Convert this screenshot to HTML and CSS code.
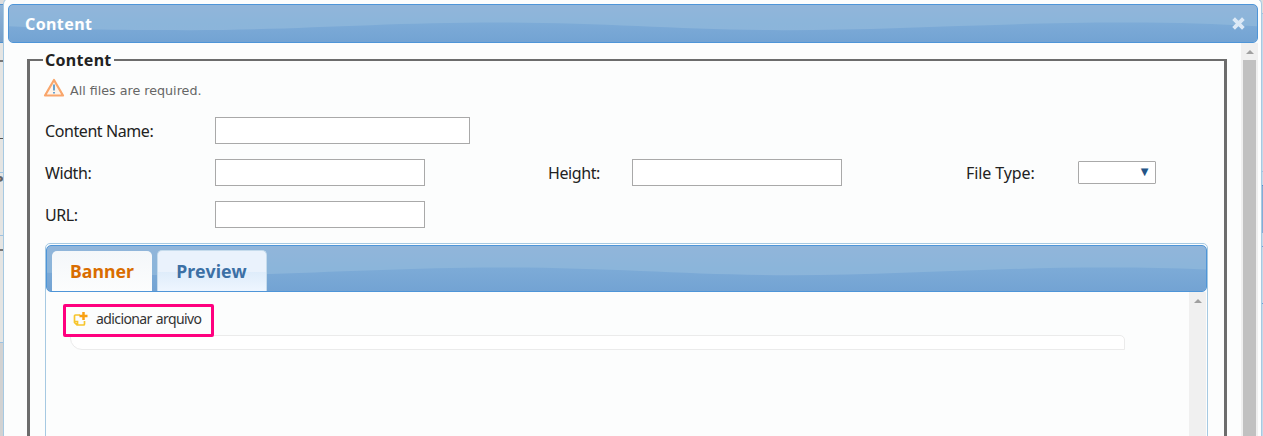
FILE: index.html
```html
<!DOCTYPE html>
<html lang="en">
<head>
<meta charset="utf-8">
<title>Content</title>
<link rel="stylesheet" href="styles.css">
</head>
<body>
<div class="backdrop">
  <div class="edge edge-left"><i class="l1"></i><i class="l2"></i><i class="l3"></i><i class="l4"></i><i class="l5"></i><i class="l6">P</i><i class="l7"></i><i class="l8"></i><i class="l9"></i></div>
  <div class="edge edge-right"><i class="r1"></i><i class="r2"></i><i class="r3"></i><i class="r4"></i><i class="r5"></i><i class="r6"></i></div>
</div>
<section class="dialog">
  <header class="titlebar bar">
    <svg class="wave" viewBox="0 0 1250 39" preserveAspectRatio="none"><defs><linearGradient id="gloss" x2="0" y2="1"><stop stop-color="#7dabd7"/><stop offset="1" stop-color="#73a3d3"/></linearGradient></defs><path d="M0 22.500C60 26 100 26.500 180 26.500C290 26.500 370 18.500 492 18.500C600 18.500 670 26.500 775 26.500C890 26.500 990 18.500 1119 18.500C1170 18.500 1210 20 1250 22.500V39H0Z"/></svg>
    <h1>Content</h1>
    <svg class="close" viewBox="0 0 12 12"><path d="M1.500 1.500L10.500 10.500M10.500 1.500L1.500 10.500"/></svg>
  </header>
  <div class="body">
    <fieldset class="content">
      <legend>Content</legend>
      <p class="notice"><svg class="warn" viewBox="0 0 22 20"><path class="tri" d="M11 2L20 17.500H2Z"/><path class="mark" d="M11 6.500V12.500M11 14V15.500"/></svg><span>All files are required.</span></p>
      <div class="row"><label>Content Name:</label><input class="wide"></div>
      <div class="row"><label>Width:</label><input><label class="height">Height:</label><input><label class="type">File Type:</label><div class="select">▼</div></div>
      <div class="row"><label>URL:</label><input></div>
      <div class="tabs">
        <nav class="tabbar bar">
          <svg class="wave" viewBox="0 0 1162 47" preserveAspectRatio="none"><path d="M0 28C40 30 80 30.500 142 30.500C252 30.500 340 22.500 454 22.500C570 22.500 640 30.500 745 30.500C850 30.500 940 22.500 1065 22.500C1100 22.500 1130 23 1162 24.500V47H0Z"/></svg>
          <a class="tab active"><span>Banner</span></a><a class="tab"><span>Preview</span></a>
        </nav>
        <div class="panel">
          <div class="pane">
            <a class="add"><svg class="addicon" viewBox="0 0 16 16"><path class="note" d="M8 4H3.500Q2.500 4 2.500 5V11.500L5 14H11.500Q12.500 14 12.500 13V10M2.500 10.500H5.500V14"/><path class="plus" d="M11.500 1V9M7.500 5H15.500"/></svg><span>adicionar arquivo</span></a>
            <div class="queue"></div>
          </div>
          <div class="scroll inner"><i class="up"></i></div>
        </div>
      </div>
    </fieldset>
    <div class="scroll outer"><i class="up"></i><i class="thumb"></i></div>
  </div>
</section>
</body>
</html>
```
FILE: styles.css
```css
* { box-sizing: border-box; }
body { margin: 0; width: 1263px; height: 436px; overflow: hidden; background: #e5e5e3; font-family: "Noto Sans", sans-serif; position: relative; }
h1, p { margin: 0; }
.backdrop { display: flex; justify-content: space-between; height: 436px; }
.edge { display: flex; flex-direction: column; overflow: hidden; }
.edge i { display: block; flex: none; font: bold 13px "DejaVu Sans", sans-serif; color: #666; }
.edge-left { width: 4px; }
.edge-right { width: 2px; background: #c5d9e8; }
.l1 { height: 4px; background: #ddd; }
.l2 { height: 39px; background: linear-gradient(#8fb3d7, #769fc9); border-top: 1px solid #4f91d0; border-bottom: 1px solid #4f91d0; }
.l3 { height: 19px; border-bottom: 2px solid #777; }
.l4 { height: 77px; border-bottom: 1px solid #555; }
.l5 { height: 34px; border-bottom: 1px solid #9fc2e0; }
.edge .l6 { height: 63px; border-bottom: 1px solid #9fc2e0; text-indent: -6px; line-height: 16px; }
.l7 { height: 15px; border-bottom: 2px solid #777; }
.l8 { height: 92px; border-bottom: 1px solid #9fc2e0; }
.l9 { height: 93px; background: #d2d2d2; }
.r1 { height: 14px; background: #ddd; border-bottom: 1px solid #9fc2e0; }
.r2 { height: 158px; border-bottom: 1px solid #9fc2e0; }
.r3 { height: 13px; }
.r4 { height: 48px; background: #83acd5; border-top: 1px solid #4f91d0; }
.r5 { height: 14px; border-bottom: 1px solid #69a2d9; }
.r6 { height: 57px; border-bottom: 1px solid #69a2d9; }
.dialog { position: absolute; left: 3px; top: -2px; width: 1259px; height: 438px; padding: 6px 3px 0 4px; border: 1px solid #a6c9e2; border-bottom: 0; border-radius: 6px 6px 0 0; background: #fcfdfd; overflow: hidden; }
.dialog > .titlebar { margin-top: -1px; }
.bar { position: relative; background: linear-gradient(#91b5da, #8bb5da 50%, #8cb4da); border: 1px solid #4e95d8; border-radius: 5px; overflow: hidden; }
.wave { position: absolute; inset: 0; width: 100%; height: 100%; fill: url(#gloss); }
.titlebar { width: 1250px; height: 39px; display: flex; align-items: center; justify-content: space-between; padding: 0 12px 0 16px; }
.titlebar h1 { position: relative; color: #fff; font-size: 16px; line-height: 24px; letter-spacing: .4px; }
.close { position: relative; width: 13px; height: 13px; stroke: #dce9f6; stroke-width: 3.500px; fill: none; }
.body { display: flex; justify-content: space-between; height: 393px; }
.content { margin: 7px 0 0 19px; width: 1200px; height: 400px; padding: 0 0 0 15px; border: 3px groove #b5b5b5; border-color: #6c6c6c; border-style: solid; border-width: 2px 2px 2px 3px; border-right: 3px solid #6c6c6c; min-width: 0; }
legend { margin-left: -2px; padding: 0 2px; font-weight: bold; font-size: 16px; line-height: 20px; height: 20px; letter-spacing: .3px; color: #222; }
.notice { display: flex; align-items: center; height: 26px; margin-top: 5px; gap: 5px; font: 12.700px "DejaVu Sans", sans-serif; color: #666; }
.notice span { padding-top: 4px; }
.warn { width: 22px; height: 20px; margin-left: -2px; flex: none; }
.tri { fill: #fff4ea; stroke: #f9a66c; stroke-width: 2.200; stroke-linejoin: round; }
.mark { stroke: #69a2d0; stroke-width: 2; }
.row { display: flex; align-items: center; height: 42px; font-size: 16px; letter-spacing: -.42px; color: #222; }
.notice + .row { margin-top: 8px; }
.row label { width: 170px; padding-top: 1px; }
.row .height { margin-left: 123px; width: 84px; }
.row .type { margin-left: 124px; width: 112px; letter-spacing: -.1px; }
input { width: 210px; height: 27px; border: 1px solid #a9a9a9; background: #fff; padding: 0; }
.wide { width: 255px; }
.select { width: 78px; height: 23px; border: 1px solid #a9a9a9; border-radius: 1px; background: #fff; padding: 0 7px; text-align: right; font: 10px/20px "DejaVu Sans", sans-serif; color: #245486; }
.tabs { margin-top: 8px; width: 1163px; height: 220px; border: 1px solid #a6c9e2; border-radius: 5px; padding-top: 1px; }
.tabbar { width: 1161px; height: 47px; display: flex; align-items: flex-end; gap: 4px; padding-left: 5px; }
.tab { position: relative; height: 41px; margin-bottom: -1px; width: 100px; display: grid; place-items: center; border-radius: 5px 5px 0 0; font-weight: bold; font-size: 17.700px; padding-bottom: 2px; }
.tab.active { margin-right: 1px; background: linear-gradient(#f4f7fa, #fcfdfd); color: #d96d00; }
.tab:not(.active) { width: 110px; height: 42px; padding-right: 1px; letter-spacing: .15px; background: linear-gradient(#eaf2fc 50%, #deecfa 50%, #eff6ff); color: #3c70a5; border: 1px solid #c5dbec; border-bottom: 0; }
.panel { display: flex; justify-content: space-between; height: 170px; }
.pane { padding: 12px 0 0 17px; }
.add { position: relative; z-index: 1; display: flex; align-items: center; gap: 8px; width: 151px; height: 33px; border: 3px solid #ff007f; border-radius: 2px; background: #fcfdfd; padding: 0 0 3px 6px; font-size: 14px; color: #333; letter-spacing: -.6px; word-spacing: 1px; white-space: nowrap; }
.add span { margin-top: -2px; }
.addicon { width: 16px; height: 16px; fill: none; flex: none; }
.note { stroke: #f6c52d; stroke-width: 1.700px; }
.plus { stroke: #f9a013; stroke-width: 2.500px; }
.queue { width: 1055px; height: 15px; margin: -2px 0 0 7px; border: 1px solid #ebebeb; border-radius: 0 5px 0 12px; background: #fff; }
.scroll { width: 17px; background: #f0f0f0; display: flex; flex-direction: column; align-items: center; flex: none; }
.inner { margin-right: 1px; }
.up { width: 0; height: 0; margin-top: 7px; border: 4px solid transparent; border-top: 0; border-bottom: 4px solid #a0a0a0; }
.thumb { width: 13px; flex: 1; margin-top: 6px; background: #c1c1c1; }
```
